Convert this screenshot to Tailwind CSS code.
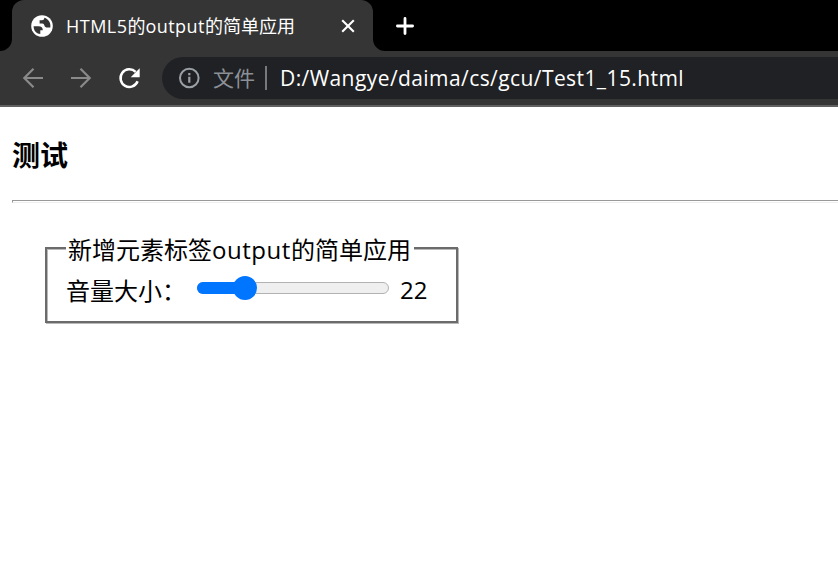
<!DOCTYPE html>
<html lang="zh">
<head>
<meta charset="utf-8">
<title>HTML5的output的简单应用</title>
<script src="https://cdn.jsdelivr.net/npm/@tailwindcss/browser@4"></script>
</head>
<body class="w-[838px] h-[564px] overflow-hidden bg-white text-black font-['Open_Sans','Noto_Sans_CJK_SC',sans-serif]">
<header class="h-[107px] bg-[#353535] border-b-2 border-[#606060] flex flex-col">
  <div class="h-[51px] bg-black flex shrink-0">
    <div class="w-3 bg-[#353535]"><div class="h-full bg-black rounded-br-[12px]"></div></div>
    <div class="w-[361px] bg-[#353535] rounded-t-[12px] flex items-center pl-[18px] pr-[17px]">
      <svg class="size-6 shrink-0" viewBox="0 0 24 24"><circle cx="12" cy="12" r="10.8" fill="#fff"/><path d="M3.600 12.200H8.500c2.800 0 4.300 1.300 4.300 4h-2.500v3.900C6 19.700 3.600 16.200 3.600 12.200ZM14.300 3.700c0 1.700-.9 2.500-2.400 2.500H9.600v3.200h2.600c1.500 0 1.800.7 2.200 2.100.5 1.500 1.400 2 3 2h2.900c.8-4.400-1.700-8.500-6-9.800Z" fill="#353535"/></svg>
      <h2 class="ml-3 w-[250px] whitespace-nowrap text-white text-[18px] leading-[26px]"><span class="tracking-[0.47px]">HTML5</span>的<span class="tracking-[0.47px]">output</span>的简单应用</h2>
      <svg class="ml-auto size-6 shrink-0 -mr-[4px]" viewBox="0 0 24 24" stroke="#fff" stroke-width="2.1" fill="none"><path d="m6.200 6.200 11.600 11.600M17.800 6.200 6.200 17.800"/></svg>
    </div>
    <div class="flex-1 bg-[#353535]"><div class="h-full bg-black rounded-bl-[12px] flex items-center pl-[20px]">
      <svg class="size-6" viewBox="0 0 24 24" stroke="#fff" stroke-width="2.800" stroke-linecap="round" fill="none"><path d="M12 4.400v15.200M4.400 12h15.200"/></svg>
    </div></div>
  </div>
  <div class="flex-1 flex items-center">
    <svg class="ml-[21px] size-6 shrink-0" viewBox="0 0 24 24" stroke="#8a8a8a" stroke-width="2.200" fill="none"><path d="M22 12H3.500M12.500 2.800 3.300 12l9.200 9.200"/></svg>
    <svg class="ml-[24px] size-6 shrink-0" viewBox="0 0 24 24" stroke="#8a8a8a" stroke-width="2.200" fill="none"><path d="M2 12h18.500M11.500 2.800l9.200 9.200-9.200 9.200"/></svg>
    <svg class="ml-[24px] size-6 shrink-0" viewBox="0 0 24 24" fill="none"><path d="M20.600 15.200A8.800 8.800 0 1 1 18.600 5.900" stroke="#fff" stroke-width="2.500"/><path d="M22.700 2.300v9h-9Z" fill="#fff"/></svg>
    <div class="ml-[21px] h-[42px] flex-1 bg-[#202124] rounded-l-full flex items-center pl-4 whitespace-nowrap">
      <svg class="size-[22px] shrink-0" viewBox="0 0 22 22" fill="none"><circle cx="11.300" cy="11" r="9.300" stroke="#9aa0a6" stroke-width="2"/><path d="M11.300 9.800v6M11.300 6v2.200" stroke="#9aa0a6" stroke-width="2.200"/></svg>
      <span class="ml-[13px] w-[42px] text-[21px] leading-[30px] text-[#8b9096]">文件</span>
      <span class="ml-[10px] w-[2px] h-6 bg-[#77797c]"></span>
      <span class="ml-[13px] text-[21px] leading-[30px] text-white tracking-[0.42px]">D:/Wangye/daima/cs/gcu/Test1_15.html</span>
    </div>
  </div>
</header>
<main class="pl-3 pt-[28px]">
  <h1 class="text-[28px] leading-[40px] font-bold">测试</h1>
  <hr class="mt-[25px] h-[3px] border-t border-b border-l border-t-[#999] border-l-[#999] border-b-[#eee]">
  <fieldset class="ml-[33px] mt-[31px] w-[413px] h-[89px] border-2 border-[#6b6b6b] shadow-[1px_1px_0_#b8b8b8,inset_1px_1px_0_#b8b8b8] px-[19px]">
    <legend class="px-[2px] w-[348px] h-[28px] bg-white text-[24px] leading-[32px] whitespace-nowrap">新增元素标签<span class="tracking-[0.55px]">output</span>的简单应用</legend>
    <div class="flex items-center h-[56px] text-[24px] leading-[32px] whitespace-nowrap">
      <span class="w-[131px] pt-[2px]">音量大小：</span>
      <div class="relative w-[192px] h-3 rounded-full bg-[#efefef] border border-[#b2b2b2] -mt-[4px]">
        <div class="absolute -left-px -top-px h-3 w-12 rounded-l-full bg-[#0075ff]"></div>
        <div class="absolute left-[35px] -top-[7px] size-6 rounded-full bg-[#0075ff]"></div>
      </div>
      <output class="ml-[11px]">22</output>
    </div>
  </fieldset>
</main>
</body>
</html>
